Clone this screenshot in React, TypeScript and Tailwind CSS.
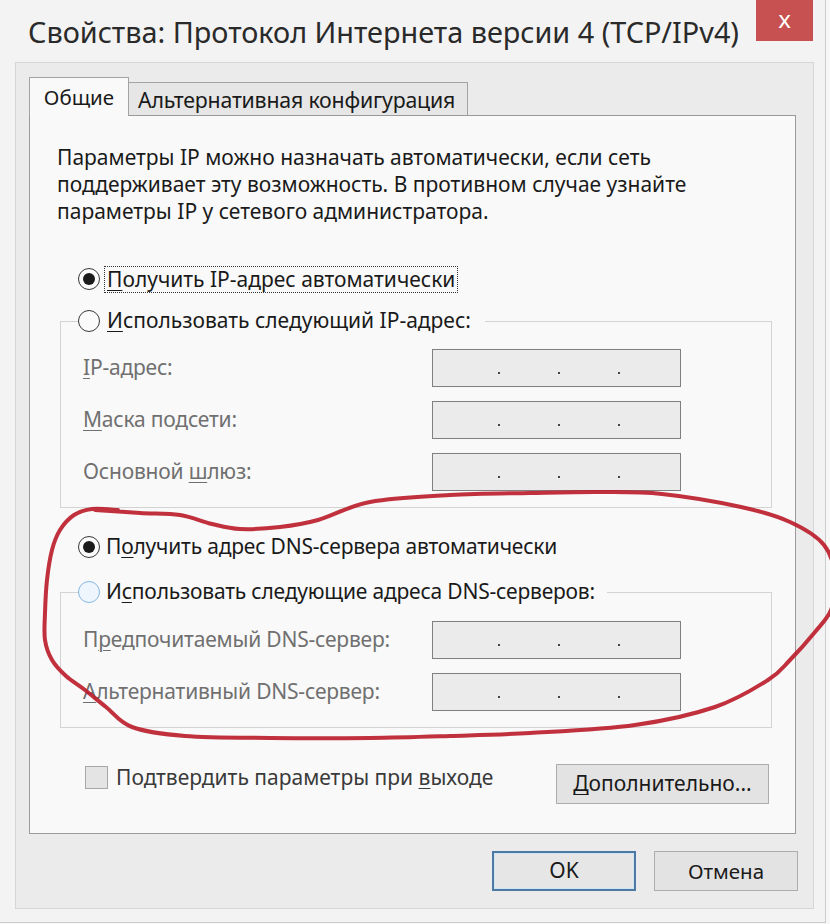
import React from "react";

function catmull(pts: [number, number][]): string {
  let d = `M ${pts[0][0]} ${pts[0][1]}`;
  for (let i = 0; i < pts.length - 1; i++) {
    const p0 = pts[i - 1] || pts[i];
    const p1 = pts[i];
    const p2 = pts[i + 1];
    const p3 = pts[i + 2] || p2;
    const c1x = p1[0] + (p2[0] - p0[0]) / 6;
    const c1y = p1[1] + (p2[1] - p0[1]) / 6;
    const c2x = p2[0] - (p3[0] - p1[0]) / 6;
    const c2y = p2[1] - (p3[1] - p1[1]) / 6;
    d += ` C ${c1x} ${c1y} ${c2x} ${c2y} ${p2[0]} ${p2[1]}`;
  }
  return d;
}

const loop: [number, number][] = [
  [95, 510], [140, 513], [180, 515], [212, 524], [240, 529], [280, 527], [318, 520], [370, 502],
  [450, 495], [530, 493], [600, 492], [662, 494], [741, 507], [790, 522], [824, 545], [836, 580],
  [831, 610], [815, 632], [790, 660], [768, 680], [715, 707], [635, 725], [530, 733], [450, 736],
  [370, 738], [270, 738], [185, 736], [132, 727], [106, 707], [85, 690], [66, 676], [52, 660],
  [45, 640], [45, 613], [47, 580], [52, 550], [60, 530], [74, 515], [92, 509], [118, 510],
];

function U({ c }: { c: string }) {
  return <span className="underline decoration-1 underline-offset-[3px]">{c}</span>;
}

function Radio({ checked, hover }: { checked?: boolean; hover?: boolean }) {
  return (
    <span
      className={
        hover
          ? "flex h-[22px] w-[22px] shrink-0 items-center justify-center rounded-full border-[1.5px] border-[#86b8e6] bg-[#eef5fc]"
          : "flex h-[22px] w-[22px] shrink-0 items-center justify-center rounded-full border-[1.5px] border-[#3a3a3a] bg-[#fbfbfb]"
      }
    >
      {checked && <span className="h-[12px] w-[12px] rounded-full bg-[#1b1b1b]" />}
    </span>
  );
}

function IpBox() {
  return (
    <div className="h-[38px] w-[249px] border-[1.5px] border-[#7f7f7f] bg-[#ebebeb]">
      <div className="flex gap-[58px] pl-[65px] pt-[22px]">
        <span className="h-[2px] w-[2px] bg-[#444]" />
        <span className="h-[2px] w-[2px] bg-[#444]" />
        <span className="h-[2px] w-[2px] bg-[#444]" />
      </div>
    </div>
  );
}

function Row({ children }: { children: React.ReactNode }) {
  return (
    <div className="flex h-[38px] items-center">
      <div className="w-[371px] pl-[22px] text-[21px] tracking-[-0.2px] text-[#707070]">{children}</div>
      <IpBox />
    </div>
  );
}

export default function App() {
  return (
    <div className="relative h-[924px] w-[830px] overflow-hidden bg-[#f7f7f7] font-['Noto_Sans',sans-serif] text-[#1a1a1a]">
      <div className="h-[923px] w-[826px] border-b border-r border-[#cdcdcd] bg-[#f3f3f3]">
        {/* title bar */}
        <div className="flex h-[62px] items-start">
          <div className="flex-1 pl-[28px] pt-[12px] text-[28.8px] leading-[40px] text-[#2a2a2a]">
            Свойства: Протокол Интернета версии 4 (TCP/IPv4)
          </div>
          <div className="mr-[12px] flex h-[41px] w-[57px] items-center justify-center bg-[#c75050] pb-[4px] text-[24px] leading-none text-white">
            x
          </div>
        </div>

        {/* client area */}
        <div className="ml-[15px] h-[847px] w-[799px] border border-[#d6d6d6] bg-[#ebebeb] pl-[13px] pt-[14px]">
          {/* tabs */}
          <div className="relative z-10 -mb-px flex h-[39px] items-end">
            <div className="flex h-[39px] w-[100px] items-center justify-center border-l border-r border-t border-[#a3a3a3] bg-[#f9f9f9] pt-[1px] text-[20.5px]">
              Общие
            </div>
            <div className="mb-px flex h-[33px] w-[339px] items-center border-r border-t border-[#a3a3a3] bg-[#e6e6e6] pl-[9px] pt-[2px] text-[21.3px] tracking-[-0.2px]">
              Альтернативная конфигурация
            </div>
          </div>

          {/* panel */}
          <div className="h-[719px] w-[767px] border border-[#9a9a9a] bg-[#f9f9f9] pt-[28px]">
            <div className="pl-[27px] text-[21px] leading-[27px]">
              <div>Параметры IP можно назначать автоматически, если сеть</div>
              <div>поддерживает эту возможность. В противном случае узнайте</div>
              <div>параметры IP у сетевого администратора.</div>
            </div>

            <div className="ml-[48px] mt-[41px] flex h-[26px] items-center gap-[4px] text-[21px]">
              <Radio checked />
              <span className="border border-dotted border-[#333] px-[2px] leading-[25px]">
                <U c="П" />олучить IP-адрес автоматически
              </span>
            </div>

            {/* group 1 */}
            <div className="ml-[30px] mt-[29px] w-[712px] border border-[#d3d3d3] pb-[16px]">
              <div className="-mt-[14px] ml-[17px] flex h-[26px] w-fit items-center gap-[7px] bg-[#f9f9f9] pr-[14px] text-[21px]">
                <Radio />
                <span>
                  <U c="И" />спользовать следующий IP-адрес:
                </span>
              </div>
              <div className="mt-[15px] flex flex-col gap-[14px]">
                <Row>
                  <U c="I" />P-адрес:
                </Row>
                <Row>
                  <U c="М" />аска подсети:
                </Row>
                <Row>
                  Основной <U c="ш" />люз:
                </Row>
              </div>
            </div>

            <div className="ml-[48px] mt-[26px] flex h-[26px] items-center gap-[6px] text-[21px] tracking-[-0.2px]">
              <Radio checked />
              <span>
                П<U c="о" />лучить адрес DNS-сервера автоматически
              </span>
            </div>

            {/* group 2 */}
            <div className="ml-[30px] mt-[32px] w-[712px] border border-[#d3d3d3] pb-[16px]">
              <div className="-mt-[14px] ml-[17px] flex h-[26px] w-fit items-center gap-[6px] bg-[#f9f9f9] pr-[12px] text-[21px] tracking-[-0.2px]">
                <Radio hover />
                <span>
                  И<U c="с" />пользовать следующие адреса DNS-серверов:
                </span>
              </div>
              <div className="mt-[16px] flex flex-col gap-[14px]">
                <Row>
                  П<U c="р" />едпочитаемый DNS-сервер:
                </Row>
                <Row>
                  <U c="А" />льтернативный DNS-сервер:
                </Row>
              </div>
            </div>

            <div className="mt-[36px] flex items-start pl-[55px] pr-[26px]">
              <div className="-mt-[2px] flex items-center gap-[8px] text-[21px] text-[#3a3a3a]">
                <span className="h-[23px] w-[23px] border border-[#a8a8a8] bg-[#e4e4e4]" />
                <span>
                  Подтвердить параметры при <U c="в" />ыходе
                </span>
              </div>
              <div className="ml-auto flex h-[40px] w-[213px] items-center justify-center border border-[#adadad] bg-[#e3e3e3] text-[21px]">
                <span>
                  <U c="Д" />ополнительно...
                </span>
              </div>
            </div>
          </div>

          {/* buttons */}
          <div className="mt-[17px] flex justify-end gap-[18px] pr-[15px]">
            <div className="flex h-[40px] w-[144px] items-center justify-center border-2 border-[#4d7aa3] bg-[#e6e6e6] text-[21px] shadow-[inset_0_0_0_1px_#cfe6f7]">
              OK
            </div>
            <div className="flex h-[40px] w-[144px] items-center justify-center border border-[#adadad] bg-[#e3e3e3] text-[20.5px]">
              Отмена
            </div>
          </div>
        </div>
      </div>

      <svg className="pointer-events-none absolute left-0 top-0" width="830" height="924" viewBox="0 0 830 924">
        <path d={catmull(loop)} fill="none" stroke="#bb1f2c" strokeWidth="4" strokeLinecap="round" strokeLinejoin="round" opacity="0.92" />
      </svg>
    </div>
  );
}
